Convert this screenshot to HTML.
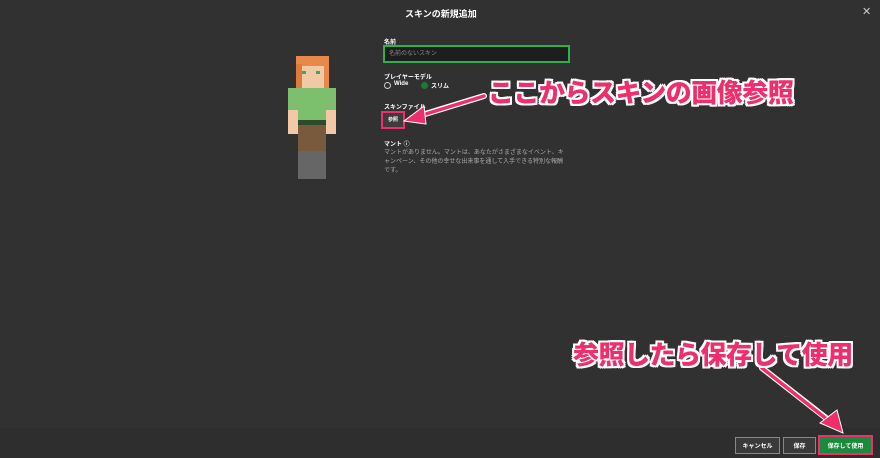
<!DOCTYPE html>
<html><head><meta charset="utf-8"><style>
body{margin:0;width:880px;height:458px;background:#313131;overflow:hidden;position:relative;font-family:"Liberation Sans","Noto Sans CJK JP",sans-serif;color:#ddd}
.a{position:absolute}
.big{position:absolute;font-weight:900;color:#ee2f6c;font-size:26px;white-space:nowrap;text-shadow:2px 0 #fff,-2px 0 #fff,0 2px #fff,0 -2px #fff,2px 2px #fff,-2px -2px #fff,2px -2px #fff,-2px 2px #fff;letter-spacing:-0.5px}
.btn{position:absolute;top:437px;height:15px;font-size:6px;font-weight:bold;color:#fff;display:flex;align-items:center;justify-content:center;border:1px solid #888;background:#3a3a3a}
</style></head><body>
<div class="a" style="left:0;top:428px;width:880px;height:30px;background:#2e2e2e"></div>
<div class="a" style="left:405px;top:7px;font-size:9px;font-weight:bold;color:#fff">スキンの新規追加</div>
<div class="a" style="left:862px;top:5px;font-size:11px;color:#ccc">✕</div>
<svg class="a" style="left:286px;top:56px" width="54" height="124">
<rect x="10" y="0" width="33" height="36" fill="#e8884a"/>
<rect x="14" y="10" width="24" height="22" fill="#f2c9a4"/>
<rect x="16" y="15" width="4" height="3" fill="#3a6"/><rect x="30" y="15" width="4" height="3" fill="#3a6"/>
<rect x="10" y="8" width="6" height="30" fill="#e07a3a"/>
<rect x="2" y="32" width="48" height="22" fill="#7cbf6c"/>
<rect x="2" y="54" width="10" height="24" fill="#f2c9a4"/><rect x="40" y="54" width="10" height="24" fill="#f2c9a4"/>
<rect x="12" y="54" width="28" height="10" fill="#7cbf6c"/>
<rect x="12" y="64" width="28" height="5" fill="#2d4a2a"/>
<rect x="12" y="69" width="28" height="26" fill="#7a5a3c"/>
<rect x="12" y="95" width="28" height="28" fill="#666"/>
</svg>
<div class="a" style="left:384px;top:37px;font-size:6px;font-weight:bold;color:#fff">名前</div>
<div class="a" style="left:383px;top:45px;width:179px;height:14px;border:2px solid #2cb24c;background:#1e1e1e;font-size:6px;color:#888;line-height:14px;padding-left:4px">名前のないスキン</div>
<div class="a" style="left:384px;top:72px;font-size:6px;font-weight:bold;color:#fff">プレイヤーモデル</div>
<div class="a" style="left:384px;top:82px;width:5px;height:5px;border:1px solid #ccc;border-radius:50%"></div>
<div class="a" style="left:394px;top:81px;font-size:6px;color:#fff;font-weight:bold">Wide</div>
<div class="a" style="left:421px;top:82px;width:5px;height:5px;border:1px solid #1a7a3a;background:#1a7a3a;border-radius:50%"></div>
<div class="a" style="left:431px;top:81px;font-size:6px;color:#fff;font-weight:bold">スリム</div>
<div class="a" style="left:384px;top:102px;font-size:6px;font-weight:bold;color:#fff">スキンファイル</div>
<div class="a" style="left:381px;top:111px;width:20px;height:14px;border:2px solid #ee2f6c;background:#3c3c3c;font-size:5px;color:#fff;font-weight:bold;text-align:center;line-height:14px">参照</div>
<div class="a" style="left:384px;top:139px;font-size:6px;font-weight:bold;color:#fff">マント ⓘ</div>
<div class="a" style="left:384px;top:149px;width:180px;font-size:6px;color:#aaa;line-height:9px">マントがありません。マントは、あなたがさまざまなイベント、キャンペーン、その他の幸せな出来事を通して入手できる特別な報酬です。</div>
<svg class="a" style="left:0;top:0" width="880" height="458">
<path d="M484 96 L412 118" stroke="#fff" stroke-width="6" stroke-linecap="round"/>
<path d="M484 96 L416 117" stroke="#ee2f6c" stroke-width="3.5" stroke-linecap="round"/>
<polygon points="404,121 424,106 426,124" fill="#ee2f6c" stroke="#fff" stroke-width="1"/>
<path d="M762 368 L835 425" stroke="#fff" stroke-width="6" stroke-linecap="round"/>
<path d="M762 368 L833 424" stroke="#ee2f6c" stroke-width="3.5" stroke-linecap="round"/>
<polygon points="843,433 820,423 837,410" fill="#ee2f6c" stroke="#fff" stroke-width="1"/>
</svg>
<div class="big" style="left:488px;top:73px">ここからスキンの画像参照</div>
<div class="big" style="left:573px;top:335px">参照したら保存して使用</div>
<div class="btn" style="left:735px;width:43px">キャンセル</div>
<div class="btn" style="left:783px;width:31px">保存</div>
<div class="btn" style="left:818px;width:51px;background:#1b8a3c;border:2px solid #ee2f6c;top:435px;height:16px">保存して使用</div>
</body></html>
